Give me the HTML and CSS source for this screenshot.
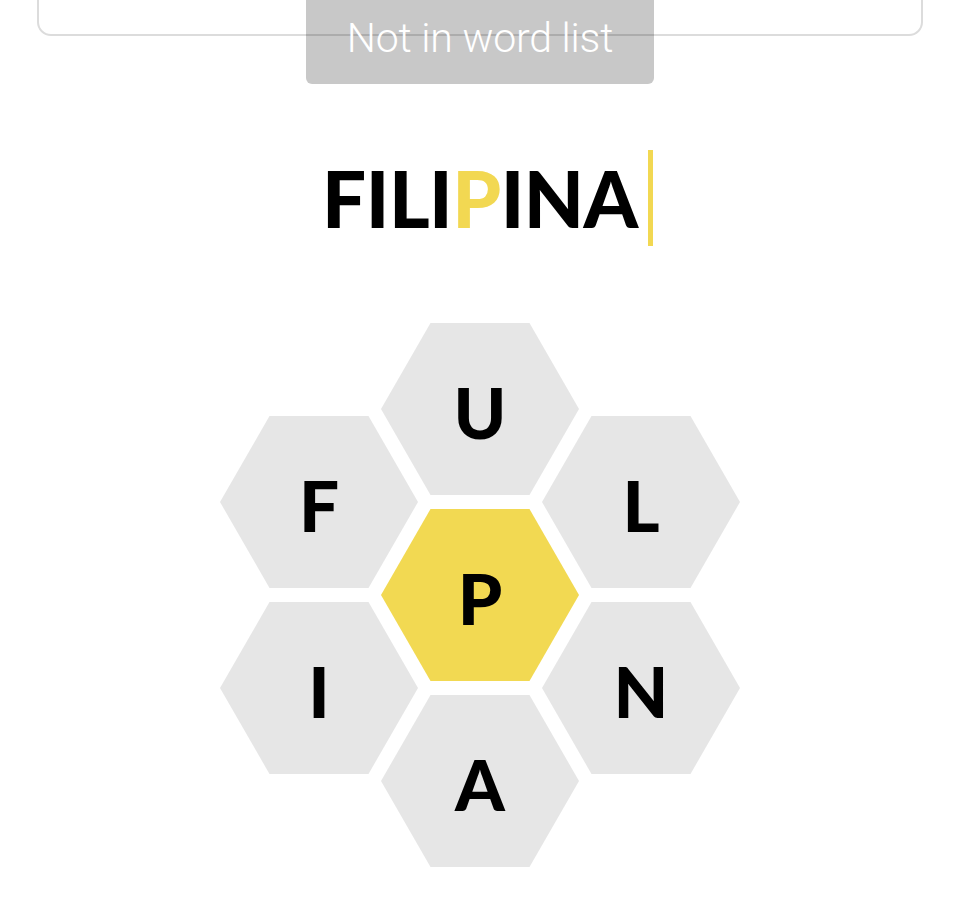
FILE: index.html
```html
<!DOCTYPE html>
<html lang="en">
<head>
<meta charset="utf-8">
<title>Spelling Bee</title>
<link rel="stylesheet" href="styles.css">
</head>
<body>
<div class="page">
  <div class="word-box"></div>
  <div class="toast">Not in word list</div>
  <div class="input-row"><span class="input-word">FILI<span class="center-letter">P</span>INA</span></div>
  <div class="hive">
    <div class="hive-col side">
      <div class="cell"><span>F</span></div>
      <div class="cell"><span>I</span></div>
    </div>
    <div class="hive-col middle">
      <div class="cell"><span>U</span></div>
      <div class="cell center"><span>P</span></div>
      <div class="cell"><span>A</span></div>
    </div>
    <div class="hive-col side">
      <div class="cell"><span>L</span></div>
      <div class="cell"><span>N</span></div>
    </div>
  </div>
</div>
</body>
</html>
```

FILE: styles.css
```css
html, body {
  margin: 0;
  padding: 0;
  background: #ffffff;
}

body {
  font-family: Lato, "Liberation Sans", Arial, sans-serif;
  width: 960px;
  height: 920px;
  overflow: hidden;
}

.page {
  position: relative;
  display: flow-root;
}

.word-box {
  box-sizing: border-box;
  margin: -60px 37px 0 37px;
  height: 96px;
  border: 2px solid #dcdcdc;
  border-radius: 14px;
}

.toast {
  position: absolute;
  top: -10px;
  left: 306px;
  width: 348px;
  height: 94px;
  box-sizing: border-box;
  padding-top: 28px;
  border-radius: 6px;
  background: rgba(0, 0, 0, 0.215);
  color: #ffffff;
  font-family: Roboto, "Liberation Sans", sans-serif;
  font-weight: 300;
  font-size: 41px;
  line-height: 40px;
  text-align: center;
  letter-spacing: -0.2px;
}

.input-row {
  margin-top: 114px;
  height: 96px;
  line-height: 96px;
  text-align: center;
  font-size: 78px;
  font-weight: 900;
  color: #000000;
}

.input-word {
  letter-spacing: -0.5px;
}

.input-word::after {
  content: "";
  display: inline-block;
  vertical-align: top;
  width: 5px;
  height: 96px;
  margin-left: 10px;
  margin-right: -15px;
  background: #f2d852;
}

.center-letter {
  color: #f2d852;
}

.hive {
  margin-top: 77px;
  display: flex;
  justify-content: center;
}

.hive-col {
  display: flex;
  flex-direction: column;
  gap: 14px;
  width: 198px;
}

.hive-col + .hive-col {
  margin-left: -37px;
}

.hive-col.side {
  padding-top: 93px;
}

.cell {
  width: 198px;
  height: 172px;
  background: #e6e6e6;
  clip-path: polygon(25% 0, 75% 0, 100% 50%, 75% 100%, 25% 100%, 0 50%);
  display: flex;
  align-items: center;
  justify-content: center;
  font-size: 71px;
  font-weight: 900;
  line-height: 1;
  color: #000000;
}

.cell span {
  padding-top: 4px;
}

.cell.center {
  background: #f2d952;
}
```
